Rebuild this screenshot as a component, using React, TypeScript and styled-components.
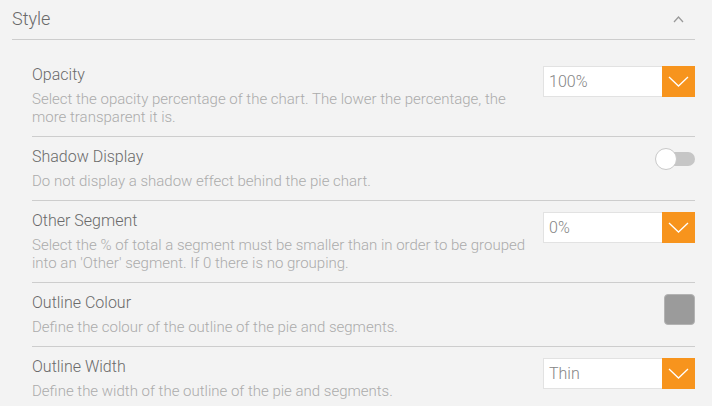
import React, { useState } from 'react';
import styled, { createGlobalStyle } from 'styled-components';

const GlobalStyle = createGlobalStyle`
  html, body {
    margin: 0;
    padding: 0;
    background: #f3f3f3;
  }

  body {
    font-family: Roboto, "Noto Sans", sans-serif;
    font-weight: 300;
  }
`;

const Panel = styled.section`
  width: 712px;
  height: 406px;
  overflow: hidden;
  background: #f3f3f3;
  padding: 0 17px 0 12px;
  box-sizing: border-box;
`;

const Header = styled.div`
  height: 39px;
  display: flex;
  align-items: center;
  justify-content: space-between;
  border-bottom: 1px solid #cdcdcd;
`;

const Title = styled.h2`
  margin: 0;
  font-size: 18px;
  font-weight: 300;
  color: #6a6a6a;
  margin-top: -2px;
`;

const Collapse = styled.button`
  border: none;
  background: none;
  padding: 0;
  margin-right: 11px;
  display: flex;
  cursor: pointer;
`;

const Settings = styled.div`
  padding: 15px 0 0 20px;
`;

const Row = styled.div<{ $last?: boolean }>`
  display: flex;
  align-items: flex-start;
  gap: 16px;
  padding: 10px 0;
  border-bottom: ${(p) => (p.$last ? 'none' : '1px solid #cdcdcd')};
`;

const Text = styled.div`
  flex: 1;
`;

const Label = styled.div`
  font-size: 16px;
  line-height: 20px;
  color: #6a6a6a;
`;

const Description = styled.div`
  margin-top: 5px;
  font-size: 15px;
  line-height: 18px;
  color: #ababab;
`;

const Control = styled.div`
  width: 152px;
  display: flex;
  justify-content: flex-end;
  padding-top: 1px;
`;

const Select = styled.div`
  width: 152px;
  height: 31px;
  box-sizing: border-box;
  display: flex;
  background: #fff;
  border: 1px solid #e2e2e2;
`;

const SelectValue = styled.span`
  flex: 1;
  padding-left: 5px;
  font-size: 16px;
  line-height: 29px;
  color: #858585;
`;

const SelectButton = styled.span`
  width: 33px;
  margin: -1px -1px -1px 0;
  background: #f7941d;
  display: flex;
  align-items: center;
  justify-content: center;
`;

const Switch = styled.button<{ $on: boolean }>`
  position: relative;
  width: 40px;
  height: 22px;
  padding: 0;
  border: none;
  background: none;
  cursor: pointer;

  &::before {
    content: '';
    position: absolute;
    left: 1px;
    right: 0;
    top: 4px;
    height: 14px;
    border-radius: 7px;
    background: ${(p) => (p.$on ? '#f7941d' : '#c6c6c6')};
  }

  &::after {
    content: '';
    position: absolute;
    top: 0;
    left: ${(p) => (p.$on ? '18px' : '0')};
    width: 20px;
    height: 20px;
    border-radius: 50%;
    background: #fff;
    border: 1px solid #c9c9c9;
  }
`;

const Swatch = styled.div<{ $colour: string }>`
  width: 31px;
  height: 31px;
  box-sizing: border-box;
  border-radius: 4px;
  background: ${(p) => p.$colour};
  border: 1px solid #b3b3b3;
`;

const Chevron = ({ up, colour, w, h }: { up?: boolean; colour: string; w: number; h: number }) => (
  <svg width={w} height={h} viewBox={`0 0 ${w} ${h}`} fill="none">
    <polyline
      points={up ? `1,${h - 1} ${w / 2},1 ${w - 1},${h - 1}` : `1,1 ${w / 2},${h - 1} ${w - 1},1`}
      stroke={colour}
      strokeWidth="1.3"
    />
  </svg>
);

const Dropdown = ({ value }: { value: string }) => (
  <Select>
    <SelectValue>{value}</SelectValue>
    <SelectButton>
      <Chevron colour="#fff" w={21} h={11} />
    </SelectButton>
  </Select>
);

export default function App() {
  const [shadow, setShadow] = useState(false);

  return (
    <>
      <GlobalStyle />
      <Panel>
        <Header>
          <Title>Style</Title>
          <Collapse aria-label="Collapse">
            <Chevron up colour="#9a9a9a" w={11} h={7} />
          </Collapse>
        </Header>

        <Settings>
          <Row>
            <Text>
              <Label>Opacity</Label>
              <Description>
                Select the opacity percentage of the chart. The lower the percentage, the more
                transparent it is.
              </Description>
            </Text>
            <Control>
              <Dropdown value="100%" />
            </Control>
          </Row>

          <Row>
            <Text>
              <Label>Shadow Display</Label>
              <Description>Do not display a shadow effect behind the pie chart.</Description>
            </Text>
            <Control>
              <Switch $on={shadow} onClick={() => setShadow(!shadow)} aria-label="Shadow Display" />
            </Control>
          </Row>

          <Row>
            <Text>
              <Label>Other Segment</Label>
              <Description>
                Select the % of total a segment must be smaller than in order to be grouped into an
                'Other' segment. If 0 there is no grouping.
              </Description>
            </Text>
            <Control>
              <Dropdown value="0%" />
            </Control>
          </Row>

          <Row>
            <Text>
              <Label>Outline Colour</Label>
              <Description>Define the colour of the outline of the pie and segments.</Description>
            </Text>
            <Control>
              <Swatch $colour="#9b9b9b" />
            </Control>
          </Row>

          <Row $last>
            <Text>
              <Label>Outline Width</Label>
              <Description>Define the width of the outline of the pie and segments.</Description>
            </Text>
            <Control>
              <Dropdown value="Thin" />
            </Control>
          </Row>
        </Settings>
      </Panel>
    </>
  );
}
